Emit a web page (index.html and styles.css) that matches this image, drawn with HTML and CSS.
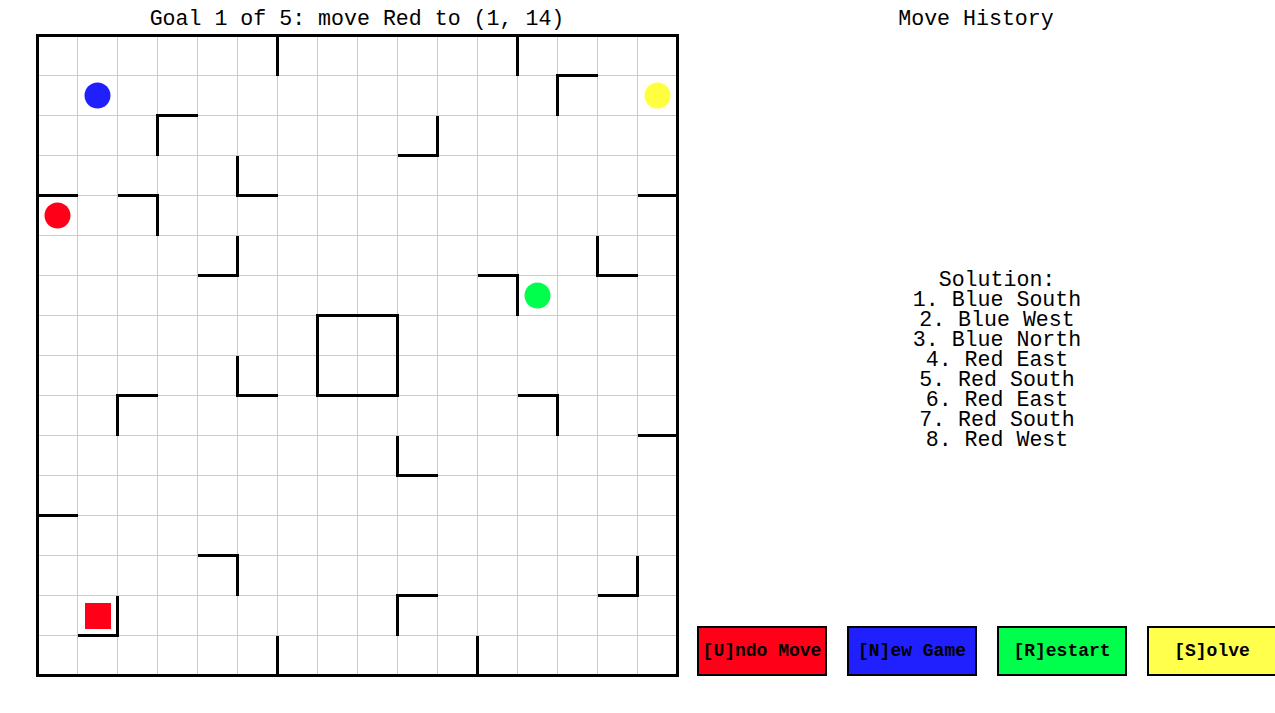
FILE: index.html
```html
<!DOCTYPE html>
<html lang="en">
<head>
<meta charset="utf-8">
<title>Robot Puzzle</title>
<link rel="stylesheet" href="styles.css">
</head>
<body>
<div class="app">
  <section class="board-col">
    <h1 class="title">Goal 1 of 5: move Red to (1, 14)</h1>
    <svg class="board" width="645" height="645" viewBox="0 0 645 645" shape-rendering="crispEdges">
      <g transform="translate(2.5 2.5)">
        <rect x="0" y="0" width="640" height="640" fill="#fff"/>
        <path class="grid" d="M40 0V640M80 0V640M120 0V640M160 0V640M200 0V640M240 0V640M280 0V640M320 0V640M360 0V640M400 0V640M440 0V640M480 0V640M520 0V640M560 0V640M600 0V640M0 40H640M0 80H640M0 120H640M0 160H640M0 200H640M0 240H640M0 280H640M0 320H640M0 360H640M0 400H640M0 440H640M0 480H640M0 520H640M0 560H640M0 600H640"/>
        <path class="walls" d="M240 0V40M480 0V40M520 80V40H560M160 80H120V120M400 80V120H360M200 120V160H240M0 160H40M80 160H120V200M600 160H640M200 200V240H160M560 200V240H600M440 240H480V280M200 320V360H240M120 360H80V400M480 360H520V400M600 400H640M360 400V440H400M0 480H40M160 520H200V560M600 520V560H560M400 560H360V600M80 560V600H40M240 600V640M440 600V640"/>
        <rect class="walls" x="280" y="280" width="80" height="80" fill="none"/>
        <rect class="border" x="0" y="0" width="640" height="640" fill="none"/>
        <rect x="47" y="567" width="26" height="26" fill="#ff0019"/>
        <g shape-rendering="auto">
          <circle cx="60" cy="60" r="13" fill="#2020ff"/>
          <circle cx="620" cy="60" r="13" fill="#ffff40"/>
          <circle cx="20" cy="180" r="13" fill="#ff0019"/>
          <circle cx="500" cy="260" r="13" fill="#00ff4c"/>
        </g>
      </g>
    </svg>
  </section>
  <section class="side">
    <h2 class="title">Move History</h2>
    <div class="solution">
      <div>Solution:</div>
      <div>1. Blue South</div>
      <div>2. Blue West</div>
      <div>3. Blue North</div>
      <div>4. Red East</div>
      <div>5. Red South</div>
      <div>6. Red East</div>
      <div>7. Red South</div>
      <div>8. Red West</div>
    </div>
    <div class="buttons">
      <button class="btn btn-red">[U]ndo Move</button>
      <button class="btn btn-blue">[N]ew Game</button>
      <button class="btn btn-green">[R]estart</button>
      <button class="btn btn-yellow">[S]olve</button>
    </div>
  </section>
</div>
</body>
</html>
```

FILE: styles.css
```css
html, body {
  margin: 0;
  padding: 0;
  background: #fff;
  overflow: hidden;
}
body {
  font-family: "Liberation Mono", "Courier New", monospace;
  color: #000;
  width: 1275px;
  height: 713px;
}
.app {
  display: flex;
  align-items: flex-start;
}
.board-col {
  width: 677px;
  display: flex;
  flex-direction: column;
}
.title {
  margin: 0;
  font-weight: normal;
  font-size: 21.6px;
  line-height: 20px;
  height: 33px;
  padding-top: 9px;
  box-sizing: border-box;
  text-align: center;
}
.board-col .title {
  margin-left: 37px;
  width: 640px;
}
.board {
  display: block;
  margin-left: 35px;
}
.grid {
  stroke: #cccccc;
  stroke-width: 1;
  fill: none;
}
.walls {
  stroke: #000;
  stroke-width: 3;
  stroke-linecap: butt;
  stroke-linejoin: miter;
  fill: none;
}
.border {
  stroke: #000;
  stroke-width: 3;
}
.side {
  width: 598px;
  display: flex;
  flex-direction: column;
}
.solution {
  margin-top: 237px;
  margin-left: 20px;
  width: 600px;
  font-size: 21.6px;
  line-height: 20px;
  text-align: center;
  white-space: nowrap;
}
.buttons {
  display: flex;
  gap: 20px;
  margin-top: 176px;
  margin-left: 20px;
}
.btn {
  flex: 0 0 auto;
  width: 130px;
  height: 50px;
  border: 2px solid #000;
  padding: 0;
  margin: 0;
  font-family: "Liberation Mono", "Courier New", monospace;
  font-weight: bold;
  font-size: 18px;
  color: #000;
  text-align: center;
  white-space: nowrap;
}
.btn-red { background: #ff0019; }
.btn-blue { background: #2020ff; }
.btn-green { background: #00ff4c; }
.btn-yellow { background: #ffff4c; }
```
